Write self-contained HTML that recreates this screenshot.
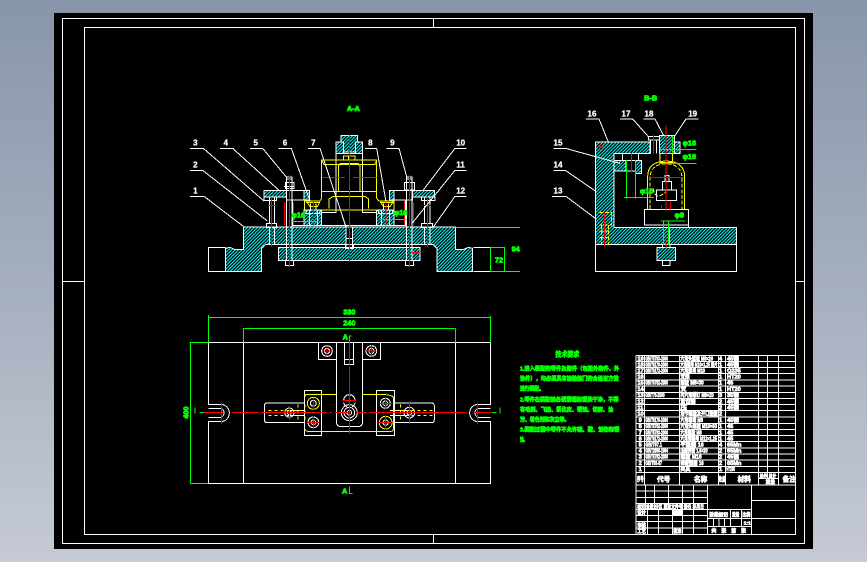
<!DOCTYPE html>
<html><head><meta charset="utf-8"><style>
html,body{margin:0;padding:0;width:867px;height:562px;overflow:hidden;background:linear-gradient(180deg,#8896aa 0%,#a5aebe 50%,#c5cad5 100%)}
svg{position:absolute;left:0;top:0;display:block}
text{font-family:"Liberation Sans","Noto Sans CJK SC",sans-serif;font-weight:bold}
.w{fill:none;stroke:#fff;stroke-width:3}
.y{fill:none;stroke:#ff0;stroke-width:3}
.r{fill:none;stroke:#f00;stroke-width:3}
.g{fill:none;stroke:#0f0;stroke-width:3}
.h{fill:url(#hz);stroke:#fff;stroke-width:3}
.l{fill:#fff;stroke:#fff;stroke-width:.8;font-size:24px;text-anchor:middle}
.gt{fill:#0f0;stroke:#0f0;stroke-width:2.5;font-size:22px;text-anchor:middle}
.tt{fill:#fff;stroke:#fff;stroke-width:2;font-size:17px}
.cn{fill:#0f0;stroke:#0f0;stroke-width:2.2;font-size:17px}
</style></head><body>
<svg width="867" height="562" viewBox="0 0 867 562" shape-rendering="crispEdges">
<defs><pattern id="hz" patternUnits="userSpaceOnUse" width="10" height="10"><rect width="10" height="10" fill="#000"/><path d="M-2 12L12 -2M-2 2L2 -2M8 12L12 8" stroke="#0ff" stroke-width="3.5"/></pattern></defs>
<rect x="54" y="13" width="759" height="536" fill="#000"/>
<rect x="62.5" y="18.5" width="742" height="525" fill="none" stroke="#fff"/>
<rect x="84.5" y="27.5" width="711" height="507" fill="none" stroke="#fff"/>
<path d="M62 281.5H84M795 281.5H805M433.5 18V27M433.5 534V543" stroke="#fff"/>

<!-- FRONT VIEW -->
<g transform="translate(180 95) scale(.33333)">
<path class="w" d="M136 457H85V529H136M880 457H931V529H880"/>
<path class="h" d="M136 460L150 457L163 463H190V396H283V448H258L245 460V529H136Z"/>
<path class="h" d="M878 460L865 457L852 463H826V396H733V448H758L771 460V529H878Z"/>
<path class="h" d="M283 396H498V448H283Z"/>
<path class="h" d="M518 396H733V448H518Z"/>
<path class="h" d="M295 457H720V497H295Z"/>
<path class="h" d="M252 287H320V306H252Z"/>
<path class="h" d="M697 287H763V306H697Z"/>
<path class="h" d="M372 287H388V315H372Z"/>
<path class="h" d="M628 287H642V315H628Z"/>
<path class="h" d="M372 345H425V392H372Z"/>
<path class="h" d="M590 345H642V392H590Z"/>
<path class="h" d="M483 121H533V171H483Z"/>
<path class="h" d="M468 141H490V175H468Z"/>
<path class="h" d="M526 141H548V175H526Z"/>
<path class="w" d="M190 396H826M283 448H733M295 457H720M320 287H372V315H320M642 287H697V315H642M338 315V392H372M676 315V392H642M468 141V353H425V392H590V353H548V141M468 175H548M425 392V345M590 392V345"/>
<path class="w" d="M498 396V457H518V396M500 430H516M496 448V460H520V448"/>
<!-- bolts -->
<path class="w" d="M320 250V497M336 250V497M680 250V497M696 250V497M320 252H336V246H320ZM316 262H342V280H316ZM312 274H344M680 252H696V246H680ZM674 262H704V285H674ZM316 497H340V511H316ZM676 497H700V511H676Z" />
<path class="w" d="M268 306V386M284 306V386M260 386H290V398H260ZM268 398V448M284 398V448M734 306V386M750 306V386M724 386H758V398H724ZM734 398V448M750 398V448M252 306H290V316H252ZM725 306H765V316H725Z"/>
<path class="w" d="M388 345V392M412 345V392M378 345H420V355H378ZM604 345V392M628 345V392M595 345H638V355H595ZM392 325V345M408 325V345M610 325V345M626 325V345"/>
<path class="y" d="M425 195H590V290H425ZM425 195L432 208H585L590 195M425 290V310L420 318H374V345M590 290V310L597 318H642V345M378 322H420M600 322H640M380 320L390 335H412L420 320M602 320L610 335H630L640 320M475 208H540V290H475ZM480 212V205H535V212M447 340V312L458 305H556L566 312V340M425 345H590M490 195V183H525V195M505 183V195"/>
<path class="r" d="M508 118V500M274 306V456M742 306V456M328 240V518M688 240V518M400 318V392M618 318V392M314 322V390M340 322V390M674 318V390M700 322V390M264 331H286M732 331H752M426 247H495M519 247H590M696 472H720"/>
<path class="g" d="M826 397H1020M930 457H975M973 457V529M930 529H1020M336 380H416M600 373H680"/>
<path class="g" d="M931 457V529"/>
<text class="gt" x="520" y="48">A-A</text>
<text class="gt" x="355" y="367">φ16</text>
<text class="gt" x="662" y="360">φ16</text>
<text class="gt" x="957" y="502">72</text>
<text class="gt" x="1007" y="470">94</text>
<path class="w" d="M30 304H72L190 394M30 226H68L262 378M30 160H70L252 318M120 160H158L296 285M210 160H248L318 245M296 160H334L390 318M384 160H420L498 396M555 160H590L618 320M620 160H657L680 245M860 160H825L730 285M860 226H825L696 385M860 304H825L760 396"/>
<text class="l" x="46" y="296">1</text>
<text class="l" x="46" y="218">2</text>
<text class="l" x="46" y="152">3</text>
<text class="l" x="137" y="152">4</text>
<text class="l" x="227" y="152">5</text>
<text class="l" x="315" y="152">6</text>
<text class="l" x="400" y="152">7</text>
<text class="l" x="571" y="152">8</text>
<text class="l" x="637" y="152">9</text>
<text class="l" x="842" y="152">10</text>
<text class="l" x="842" y="218">11</text>
<text class="l" x="842" y="296">12</text>
</g>

<!-- SIDE VIEW -->
<g transform="translate(540 85) scale(.33333)">
<path class="h" d="M166 171H330V206H222V427H590V478H166Z"/>
<path class="h" d="M396 171H420V206H396Z"/>
<path class="h" d="M222 226H305V266H286V226H258V258H222Z"/>
<path class="h" d="M351 487H407V527H351Z"/>
<path class="h" d="M358 152H403V206H358Z" />
<path class="w" d="M166 478V560H590V478M222 206V226M248 206V226M296 206V226M258 226H286V258H258ZM368 478V487H390V478M368 527H390V541H368Z M370 427V478M388 427V478"/>
<path class="w" d="M313 373H445V420H313ZM313 420H445V427H313M349 315H410V346H349ZM368 290H394V315H368ZM375 272H387V290H375ZM325 155H358V165H325ZM332 165V206M350 165V206"/>
<path class="y" d="M323 373V275Q323 230 378 228Q434 230 434 275V373M360 206H398V232H360Z"/>
<path class="y" stroke-dasharray="12 5" d="M330 372V280Q330 238 378 236Q426 238 426 280V372M340 310Q345 350 378 320M178 382H214V420H178M185 420V480M205 420V480M178 438H208M178 458H208"/>
<path class="r" d="M378 120V380M340 150V206M274 204V262M180 186H190M168 186H192M180 176V196M325 278H430M193 382V485M378 456V490M365 360V374M392 350V374"/>
<path class="g" d="M358 193H470M358 206V235H470M398 152V206M260 225V340M286 225V340M252 338H342M363 408H435M371 408V480M386 408V480"/>
<text class="gt" x="332" y="46">B-B</text>
<text class="gt" x="448" y="182">φ16</text>
<text class="gt" x="448" y="222">φ16</text>
<text class="gt" x="320" y="325">φ16</text>
<text class="gt" x="418" y="397">φ8</text>
<path class="w" d="M138 102H177L205 171M240 102H278L325 155M310 102H345L370 150M476 102H438L405 152M40 190H76L240 235M40 256H76L166 318M36 334H78L170 403"/>
<text class="l" x="156" y="94">16</text>
<text class="l" x="258" y="94">17</text>
<text class="l" x="327" y="94">18</text>
<text class="l" x="458" y="94">19</text>
<text class="l" x="54" y="182">15</text>
<text class="l" x="54" y="248">14</text>
<text class="l" x="54" y="326">13</text>
</g>

<!-- TOP VIEW -->
<g transform="translate(180 300) scale(.33333)">
<path class="w" d="M85 127H931V313H895A25 25 0 0 0 895 365H931V550H85V365H122A26 26 0 0 0 122 313H85ZM190 127V550M826 127V550"/>
<path class="w" d="M85 325H122A14 14 0 0 1 122 352H85M931 325H895A14 14 0 0 0 895 352H931"/>
<path class="w" d="M415 127H469V179H415ZM548 127H602V179H548ZM469 127V365Q469 380 484 380H533Q548 380 548 365V127M493 127V193H521V127M493 178H521"/>
<circle class="w" cx="441" cy="153" r="16"/><circle class="w" cx="441" cy="153" r="8"/>
<circle class="w" cx="574" cy="153" r="16"/><circle class="w" cx="574" cy="153" r="8"/>
<path class="w" d="M491 301A17 17 0 0 1 525 301"/><path class="w" d="M491 308A17 17 0 0 0 500 320"/><path class="w" d="M525 308A17 17 0 0 1 516 320"/>
<circle class="w" cx="508" cy="338" r="24"/><circle class="w" cx="508" cy="338" r="16"/><circle class="w" cx="508" cy="338" r="7"/>
<rect class="w" x="373" y="271" width="52" height="136"/>
<rect class="w" x="590" y="271" width="53" height="136"/>
<path class="w" d="M373 309H262Q253 309 253 318V359Q253 368 262 368H373M643 309H754Q763 309 763 318V359Q763 368 754 368H643"/>
<path class="w" d="M329 331H373M329 346H373M630 331H690M630 346H690"/>
<circle class="w" cx="328" cy="338" r="14"/><circle class="w" cx="328" cy="338" r="6"/>
<circle class="w" cx="688" cy="338" r="16"/><circle class="w" cx="688" cy="338" r="7"/>
<circle class="y" cx="400" cy="310" r="18"/><circle class="w" cx="400" cy="310" r="9"/>
<circle class="w" cx="400" cy="367" r="16"/><circle class="w" cx="400" cy="367" r="7"/>
<circle class="w" cx="616" cy="310" r="15"/><circle class="w" cx="616" cy="310" r="7"/>
<circle class="y" cx="617" cy="368" r="19"/><circle class="w" cx="617" cy="368" r="8"/>
<path class="y" d="M375 290Q375 283 382 283H469M548 283H590Q636 283 640 292V388Q640 394 632 394H590M375 388Q377 394 384 394H590" />
<path d="M265 331H372M265 346H372M640 331H763M640 346H763M354 313V368M375 313V368M662 313V368M640 313V368" class="y" stroke-dasharray="10 8"/>
<path class="r" d="M72 337H130M155 337H235M243 337H440M450 337H456M465 337H510M530 337H560M567 337H860M880 337H935M124 307V374M892 307V374M508 120V193M508 200V402M441 135V170M574 135V170M328 318V360M688 303V372M400 293V330M400 348V385M617 293V330M617 345V388M487 301H528M425 153H458M558 153H590M383 367H418M595 368H636M598 310H634M670 338H706"/>
<path class="g" d="M85 45V127M931 48V127M85 52H931M190 85H826M190 85V127M826 85V127M28 127H85M31 127V550M31 550H85M58 337H72M936 337H950M45 340V322M960 340V322M508 125V108H515M508 560V580H518"/>
<text class="gt" x="508" y="43">330</text>
<text class="gt" x="508" y="77">240</text>
<text class="gt" x="0" y="0" transform="translate(25 338) rotate(-90)">400</text>
<text class="gt" x="496" y="118">A</text>
<text class="gt" x="494" y="580">A</text>
</g>

<!-- TECH TEXT -->
<g transform="translate(510 340) scale(.33333)">
<text class="cn" x="136" y="49" textLength="72" lengthAdjust="spacingAndGlyphs" style="font-size:21px">技术要求</text>
<text class="cn" x="30" y="91" textLength="298" lengthAdjust="spacingAndGlyphs">1.进入装配的零件及部件（包括外购件、外</text>
<text class="cn" x="30" y="122" textLength="296" lengthAdjust="spacingAndGlyphs">协件），均必须具有检验部门的合格证方能</text>
<text class="cn" x="30" y="152" textLength="72" lengthAdjust="spacingAndGlyphs">进行装配。</text>
<text class="cn" x="30" y="184" textLength="296" lengthAdjust="spacingAndGlyphs">2.零件在装配前必须清理和清洗干净，不得</text>
<text class="cn" x="30" y="215" textLength="280" lengthAdjust="spacingAndGlyphs">有毛刺、飞边、氧化皮、锈蚀、切屑、油</text>
<text class="cn" x="30" y="245" textLength="148" lengthAdjust="spacingAndGlyphs">污、着色剂和灰尘等。</text>
<text class="cn" x="30" y="275" textLength="298" lengthAdjust="spacingAndGlyphs">3.装配过程中零件不允许磕、碰、划伤和锈</text>
<text class="cn" x="30" y="305" textLength="22" lengthAdjust="spacingAndGlyphs">蚀。</text>
</g>

<!-- TITLE BLOCK -->
<g transform="translate(630 345) scale(.33333)">
<path class="w" d="M18 31H495M18 50H495M18 68H495M18 86H495M18 105H495M18 123H495M18 142H495M18 160H495M18 179H495M18 197H495M18 216H495M18 235H495M18 253H495M18 272H495M18 290H495M18 309H495M18 327H495M18 345H495M18 364H495M18 382H495M18 420H495"/>
<path class="w" d="M18 31V568M43 31V420M148 31V420M265 31V420M287 31V420M385 31V420M413 31V400M445 31V420M385 400H445"/>
<path class="w" d="M18 438H232M18 457H232M18 475H232M18 493H232M18 512H232M18 530H232M18 549H232M18 568H364M46 420V493M73 420V493M115 420V493M157 420V568M190 420V568M232 420V568M52 493V568M85 493V568M127 493V568M364 420V568M364 466H495M364 520H495M232 493H364M232 520H364M232 544H364M301 493V544M334 493V544M250 520V544M267 520V544M284 520V544"/>
<text class="tt" x="22" y="46">19</text><text class="tt" x="46" y="46" textLength="68" lengthAdjust="spacingAndGlyphs">GB/T5783-2000</text><text class="tt" x="151" y="46" textLength="98" lengthAdjust="spacingAndGlyphs">六角头螺栓 M8×20</text><text class="tt" x="267" y="46">4</text><text class="tt" x="291" y="46">45钢</text>
<text class="tt" x="22" y="64">18</text><text class="tt" x="46" y="64" textLength="68" lengthAdjust="spacingAndGlyphs">GB/T6170-2000</text><text class="tt" x="151" y="64" textLength="112" lengthAdjust="spacingAndGlyphs">六角螺母 M10×1.25 垫片</text><text class="tt" x="267" y="64">1</text><text class="tt" x="291" y="64">45钢</text>
<text class="tt" x="22" y="82">17</text><text class="tt" x="46" y="82" textLength="68" lengthAdjust="spacingAndGlyphs">GB/T6172-2000</text><text class="tt" x="151" y="82" textLength="74" lengthAdjust="spacingAndGlyphs">六角螺母 M10</text><text class="tt" x="267" y="82">1</text><text class="tt" x="291" y="82">Q235</text>
<text class="tt" x="22" y="101">16</text><text class="tt" x="151" y="101" textLength="28" lengthAdjust="spacingAndGlyphs">支架</text><text class="tt" x="267" y="101">1</text><text class="tt" x="291" y="101">HT20</text>
<text class="tt" x="22" y="119">15</text><text class="tt" x="46" y="119" textLength="68" lengthAdjust="spacingAndGlyphs">GB/T5782-2000</text><text class="tt" x="151" y="119" textLength="70" lengthAdjust="spacingAndGlyphs">螺栓 M8×30</text><text class="tt" x="267" y="119">1</text><text class="tt" x="291" y="119">45</text>
<text class="tt" x="22" y="138">14</text><text class="tt" x="151" y="138" textLength="18" lengthAdjust="spacingAndGlyphs">支</text><text class="tt" x="267" y="138">1</text><text class="tt" x="291" y="138">HT20</text>
<text class="tt" x="22" y="156">13</text><text class="tt" x="46" y="156" textLength="58" lengthAdjust="spacingAndGlyphs">GB/T70-2000</text><text class="tt" x="151" y="156" textLength="100" lengthAdjust="spacingAndGlyphs">内六角螺钉 M8×20</text><text class="tt" x="267" y="156">3</text><text class="tt" x="291" y="156">35钢</text>
<text class="tt" x="22" y="175">12</text><text class="tt" x="151" y="175" textLength="46" lengthAdjust="spacingAndGlyphs">定位销</text><text class="tt" x="267" y="175">2</text><text class="tt" x="291" y="175">45钢</text>
<text class="tt" x="22" y="193">11</text><text class="tt" x="151" y="193" textLength="20" lengthAdjust="spacingAndGlyphs">压</text><text class="tt" x="267" y="193">2</text><text class="tt" x="291" y="193">45钢</text>
<text class="tt" x="22" y="212">10</text><text class="tt" x="151" y="212" textLength="112" lengthAdjust="spacingAndGlyphs">活节螺栓及开口垫圈</text><text class="tt" x="267" y="212">2</text>
<text class="tt" x="26" y="231">9</text><text class="tt" x="46" y="231" textLength="68" lengthAdjust="spacingAndGlyphs">GB/T6170-2000</text><text class="tt" x="151" y="231" textLength="68" lengthAdjust="spacingAndGlyphs">六角螺母 M8</text><text class="tt" x="267" y="231">1</text><text class="tt" x="291" y="231">45钢</text>
<text class="tt" x="26" y="249">8</text><text class="tt" x="46" y="249" textLength="68" lengthAdjust="spacingAndGlyphs">GB/T5782-2000</text><text class="tt" x="151" y="249" textLength="110" lengthAdjust="spacingAndGlyphs">六角头螺栓 M10×60</text><text class="tt" x="267" y="249">1</text><text class="tt" x="291" y="249">45</text>
<text class="tt" x="26" y="268">7</text><text class="tt" x="46" y="268" textLength="68" lengthAdjust="spacingAndGlyphs">GB/T5783-2000</text><text class="tt" x="151" y="268" textLength="64" lengthAdjust="spacingAndGlyphs">六角螺栓 M8</text><text class="tt" x="267" y="268">1</text><text class="tt" x="291" y="268">45</text>
<text class="tt" x="26" y="286">6</text><text class="tt" x="46" y="286" textLength="68" lengthAdjust="spacingAndGlyphs">GB/T6172-2000</text><text class="tt" x="151" y="286" textLength="110" lengthAdjust="spacingAndGlyphs">六角薄螺母 M12×1.25</text><text class="tt" x="267" y="286">1</text><text class="tt" x="291" y="286">45</text>
<text class="tt" x="26" y="305">5</text><text class="tt" x="46" y="305" textLength="50" lengthAdjust="spacingAndGlyphs">GB/T97.1</text><text class="tt" x="151" y="305" textLength="70" lengthAdjust="spacingAndGlyphs">平垫圈 16</text><text class="tt" x="267" y="305">4</text><text class="tt" x="291" y="305">65Mn</text>
<text class="tt" x="26" y="323">4</text><text class="tt" x="46" y="323" textLength="68" lengthAdjust="spacingAndGlyphs">GB/T2089-1994</text><text class="tt" x="151" y="323" textLength="82" lengthAdjust="spacingAndGlyphs">压缩弹簧 1.6×20</text><text class="tt" x="267" y="323">2</text><text class="tt" x="291" y="323">65Mn</text>
<text class="tt" x="26" y="341">3</text><text class="tt" x="46" y="341" textLength="68" lengthAdjust="spacingAndGlyphs">GB/T5782-2000</text><text class="tt" x="151" y="341" textLength="64" lengthAdjust="spacingAndGlyphs">螺栓 M16</text><text class="tt" x="267" y="341">2</text><text class="tt" x="291" y="341">45钢</text>
<text class="tt" x="26" y="360">2</text><text class="tt" x="46" y="360" textLength="50" lengthAdjust="spacingAndGlyphs">GB/T93-87</text><text class="tt" x="151" y="360" textLength="70" lengthAdjust="spacingAndGlyphs">弹簧垫圈 16</text><text class="tt" x="267" y="360">2</text><text class="tt" x="291" y="360">65Mn</text>
<text class="tt" x="26" y="378">1</text><text class="tt" x="151" y="378" textLength="30" lengthAdjust="spacingAndGlyphs">夹具</text><text class="tt" x="267" y="378">1</text><text class="tt" x="289" y="378" textLength="26" lengthAdjust="spacingAndGlyphs">HT200</text>
<text class="tt" x="21" y="408" style="font-size:19px" textLength="20" lengthAdjust="spacingAndGlyphs">序号</text>
<text class="tt" x="81" y="410" style="font-size:20px">代号</text>
<text class="tt" x="192" y="410" style="font-size:20px">名称</text>
<text class="tt" x="266" y="410" style="font-size:18px" textLength="20" lengthAdjust="spacingAndGlyphs">数量</text>
<text class="tt" x="323" y="410" style="font-size:20px">材料</text>
<text class="tt" x="389" y="399" style="font-size:16px" textLength="50" lengthAdjust="spacingAndGlyphs">单件 总计</text>
<text class="tt" x="407" y="416" style="font-size:14px">重量</text>
<text class="tt" x="458" y="410" style="font-size:20px">备注</text>
<text class="tt" x="22" y="490" style="font-size:15px" textLength="200" lengthAdjust="spacingAndGlyphs">标记 处数 分区 更改文件号 签名 年月日</text>
<text class="tt" x="22" y="509" style="font-size:15px" textLength="26" lengthAdjust="spacingAndGlyphs">设计</text>
<rect x="127" y="494" width="30" height="17" fill="#fff"/>
<text class="tt" x="22" y="546" style="font-size:15px" textLength="26" lengthAdjust="spacingAndGlyphs">审核</text>
<text class="tt" x="22" y="564" style="font-size:15px" textLength="26" lengthAdjust="spacingAndGlyphs">工艺</text>
<text class="tt" x="130" y="564" style="font-size:15px" textLength="24" lengthAdjust="spacingAndGlyphs">批准</text>
<text class="tt" x="238" y="514" style="font-size:15px" textLength="56" lengthAdjust="spacingAndGlyphs">阶段标记</text>
<text class="tt" x="306" y="514" style="font-size:15px" textLength="22" lengthAdjust="spacingAndGlyphs">重量</text>
<text class="tt" x="337" y="514" style="font-size:15px" textLength="24" lengthAdjust="spacingAndGlyphs">比例</text>
<text class="tt" x="341" y="538" style="font-size:15px">1:1</text>
<text class="tt" x="244" y="563" style="font-size:15px" textLength="104" lengthAdjust="spacing">共 张 第 张</text>
</g>
</svg>
</body></html>
